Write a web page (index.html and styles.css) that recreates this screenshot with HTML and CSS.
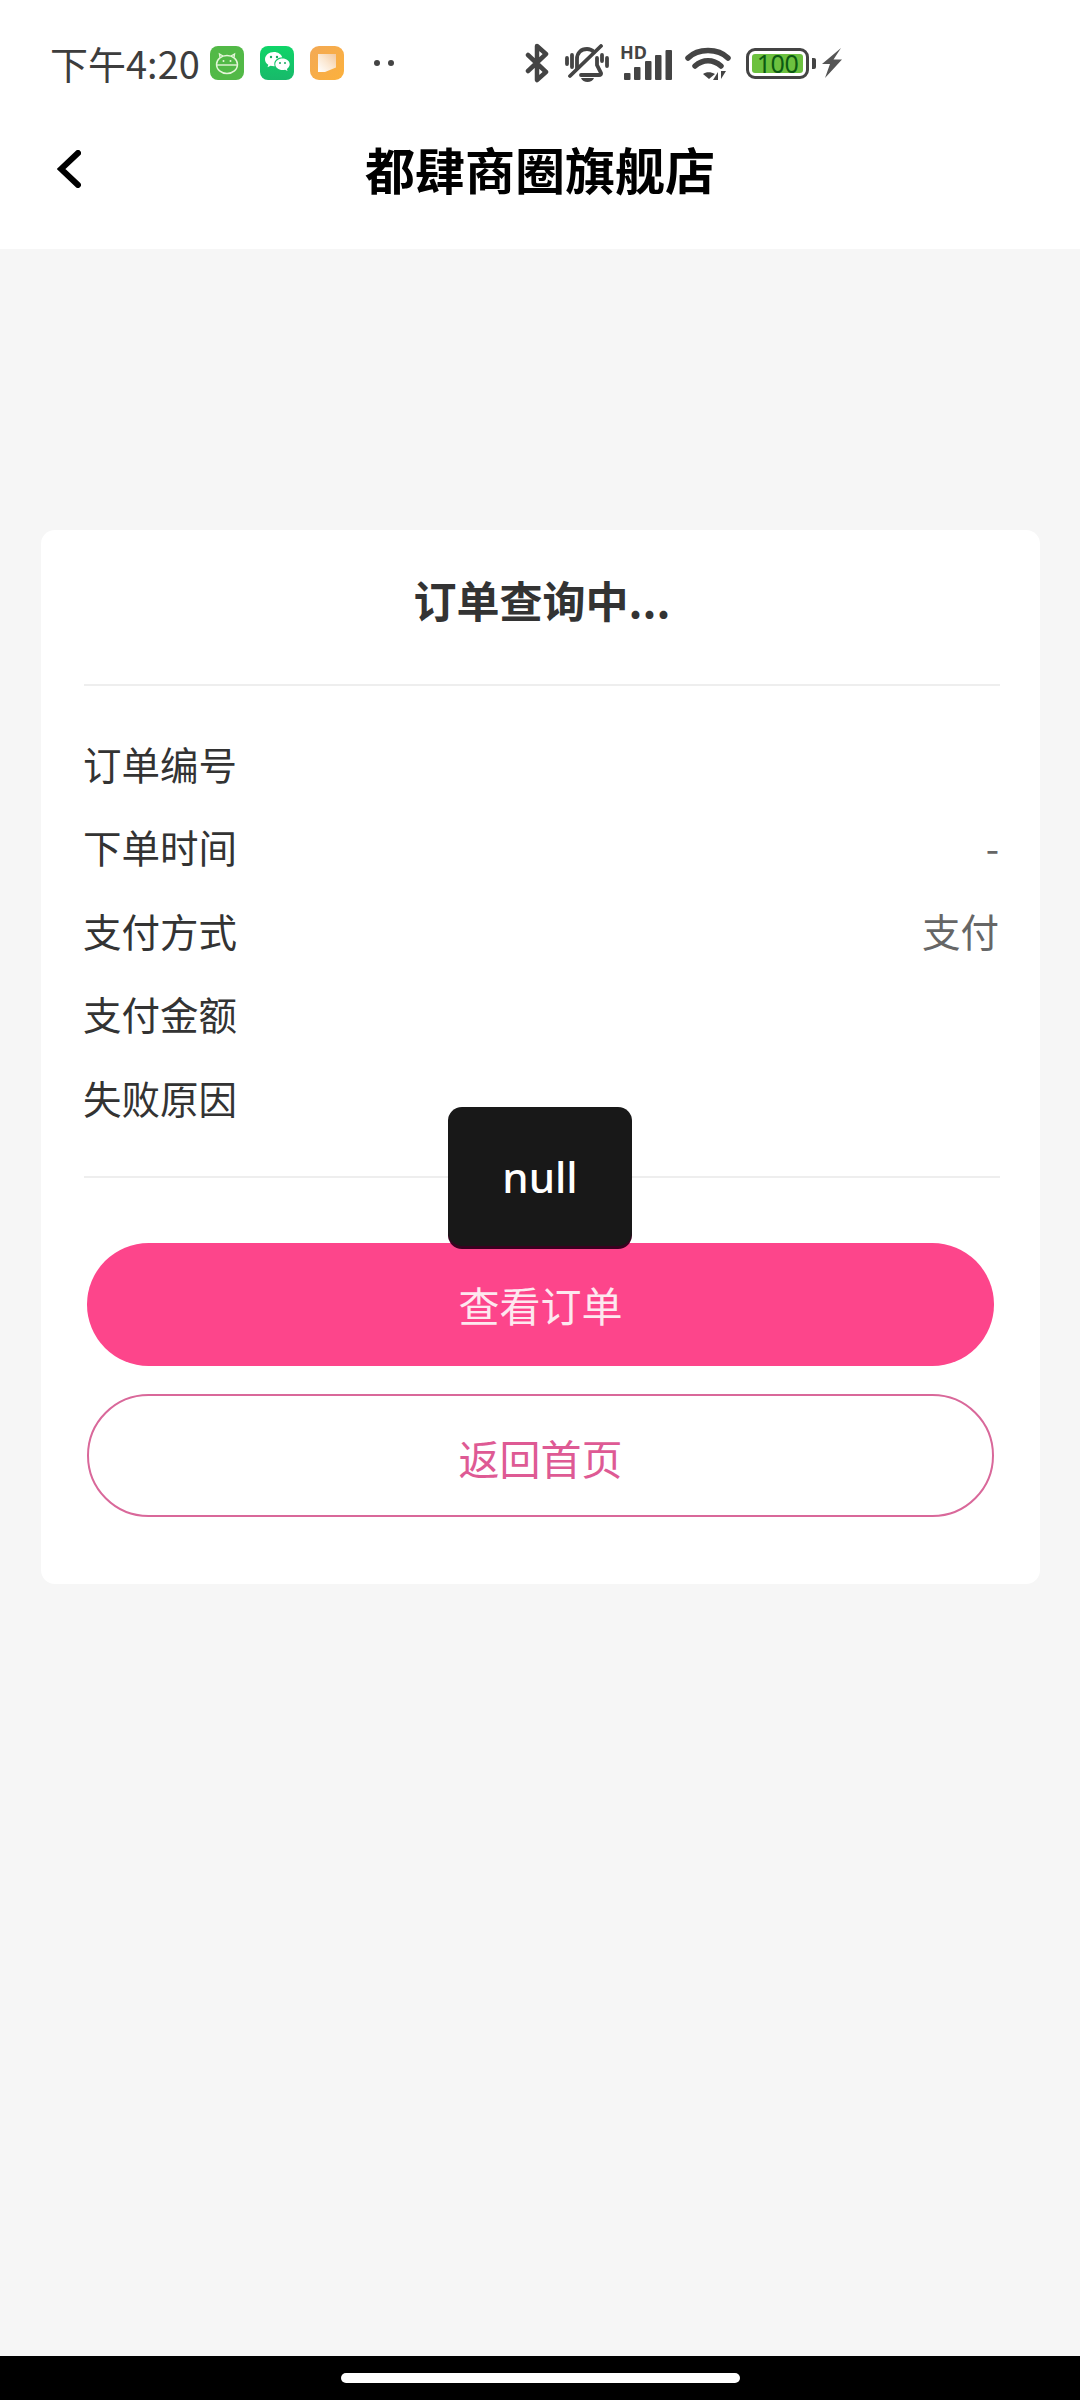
FILE: index.html
```html
<!DOCTYPE html>
<html lang="zh-CN">
<head>
<meta charset="utf-8">
<title>都肆商圈旗舰店</title>
<link rel="stylesheet" href="styles.css">
</head>
<body>
<div class="screen">
  <header class="top">
    <div class="status">
      <span class="time">下午4:20</span>
      <div class="apps">
        <svg class="app" viewBox="0 0 34 34"><rect width="34" height="34" rx="8" fill="#52b947"/><g fill="none" stroke="#e4f5d8" stroke-width="1.4"><ellipse cx="17" cy="18.5" rx="10.5" ry="9"/><path d="M7 19h20"/><path d="M10 11.5 9.5 8l3.5 2M24 11.5l.5-3.500-3.500 2"/></g><circle cx="13.500" cy="15" r="1" fill="#e4f5d8"/><circle cx="20.500" cy="15" r="1" fill="#e4f5d8"/></svg>
        <svg class="app" viewBox="0 0 34 34"><defs><linearGradient id="wx" x1="0" y1="0" x2="0" y2="1"><stop offset="0" stop-color="#0fd568"/><stop offset="1" stop-color="#18b96a"/></linearGradient></defs><rect width="34" height="34" rx="8" fill="url(#wx)"/><path d="M14 6c-5 0-9 3.200-9 7.200 0 2.300 1.300 4.200 3.300 5.500l-.8 2.600 3-1.600c1.100.3 2.200.5 3.500.5h.7c-.3-.8-.4-1.500-.4-2.200 0-3.700 3.500-6.500 8-6.700C21.200 8.100 17.900 6 14 6z" fill="#fff"/><path d="M22.500 12.500c-4 0-7.200 2.600-7.200 5.800s3.200 5.800 7.200 5.800c.9 0 1.800-.1 2.600-.4l2.400 1.300-.6-2.100c1.700-1.100 2.800-2.800 2.800-4.600 0-3.200-3.200-5.800-7.200-5.800z" fill="#fff"/><circle cx="11" cy="11" r="1.200" fill="#18a860"/><circle cx="17" cy="11" r="1.200" fill="#18a860"/><circle cx="20" cy="17" r="1" fill="#18a860"/><circle cx="25" cy="17" r="1" fill="#18a860"/></svg>
        <svg class="app" viewBox="0 0 34 34"><defs><linearGradient id="nt" x1="0" y1="0" x2="1" y2="1"><stop offset="0" stop-color="#f3a955"/><stop offset="1" stop-color="#fcb13c"/></linearGradient><linearGradient id="pg" x1="0" y1="1" x2="1" y2="0"><stop offset="0" stop-color="#fff"/><stop offset=".5" stop-color="#fbe8d2"/><stop offset="1" stop-color="#f2c9a0"/></linearGradient></defs><rect width="34" height="34" rx="9" fill="url(#nt)"/><path d="M8 8h18v13.500L15 26H8z" fill="url(#pg)"/></svg>
      </div>
      <div class="more"><i></i><i></i></div>
      <div class="sys">
        <svg class="i-bt" viewBox="0 0 24 40"><path d="M3 12 21 29 12 37V3l9 8L3 28" fill="none" stroke="#444" stroke-width="4.500" stroke-linejoin="round" stroke-linecap="round"/></svg>
        <svg class="i-bell" viewBox="0 0 44 38"><g fill="none" stroke="#444" stroke-width="3.800" stroke-linecap="round"><path d="M36 2 5 32"/><path d="M12 24V15c0-6 4-10 10-10 3 0 5 1 7 3"/><path d="M32 14v7l4 8c.4 1-.3 2-2 2H16"/><path d="M2 14v6M7 11v12M37 11v6M42 14v8"/></g><path d="M16 34h13c-1 2.500-3.500 4-6.500 4S17 36.500 16 34z" fill="#444"/></svg>
        <div class="signal">
          <span class="hd">HD</span>
          <svg class="i-bars" viewBox="0 0 48 30"><rect x="0" y="23" width="6.500" height="7" rx="1" fill="#444"/><rect x="10" y="17" width="6.500" height="13" rx="1" fill="#444"/><rect x="21" y="11" width="6.500" height="19" rx="1" fill="#444"/><rect x="31" y="5" width="6.500" height="25" rx="1" fill="#444"/><rect x="41.500" y="0" width="6.500" height="30" rx="1" fill="#444"/></svg>
        </div>
        <svg class="i-wifi" viewBox="0 0 46 34"><g fill="none" stroke="#444" stroke-width="5.500" stroke-linecap="round"><path d="M3 12C13 2 33 2 43 12"/><path d="M10 20c8-7 18-7 26 0"/></g><path d="M24 33l-6-5c3-2.500 8-2.500 12 0z" fill="#444"/><path d="M33 34v-8l-5 8zM36 25v8l5-8z" fill="#444"/></svg>
        <div class="battery">
          <div class="cell"><span class="level">100</span></div>
          <i class="nub"></i>
        </div>
        <svg class="i-bolt" viewBox="0 0 20 30"><path d="M19 0 11.500 11.500H20L3 30l5-14H0z" fill="#555"/></svg>
      </div>
    </div>
    <nav class="nav">
      <svg class="back" viewBox="0 0 24 38"><path d="M21 3 4 19l17 16" fill="none" stroke="#000" stroke-width="6" stroke-linecap="round" stroke-linejoin="miter"/></svg>
      <h1 class="shop">都肆商圈旗舰店</h1>
    </nav>
  </header>

  <main class="main">
    <section class="card">
      <h2 class="state">订单查询中...</h2>
      <dl class="rows">
        <div class="row"><dt>订单编号</dt><dd></dd></div>
        <div class="row"><dt>下单时间</dt><dd>-</dd></div>
        <div class="row"><dt>支付方式</dt><dd>支付</dd></div>
        <div class="row"><dt>支付金额</dt><dd></dd></div>
        <div class="row"><dt>失败原因</dt><dd></dd></div>
      </dl>
      <div class="actions">
        <button class="btn primary">查看订单</button>
        <button class="btn ghost">返回首页</button>
      </div>
    </section>
    <div class="toast">null</div>
  </main>

  <footer class="gesture"><i class="pill"></i></footer>
</div>
</body>
</html>
```
FILE: styles.css
```css
* { box-sizing: border-box; }
html, body { margin: 0; padding: 0; }
body {
  width: 1080px;
  height: 2400px;
  overflow: hidden;
  font-family: "Noto Sans CJK SC", "Noto Sans", sans-serif;
  color: #333;
  background: #f6f6f6;
}
.screen { display: flex; flex-direction: column; height: 2400px; position: relative; }

.top { background: #fff; height: 249px; flex: none; }
.status { height: 126px; display: flex; align-items: center; padding-left: 50px; }
.time { font-size: 38px; line-height: 1; color: #3d3d3d; width: 160px; white-space: nowrap; }
.apps { display: flex; gap: 16px; }
.app { width: 34px; height: 34px; display: block; }
.more { display: flex; gap: 8px; margin-left: 30px; }
.more i { width: 6px; height: 6px; border-radius: 50%; background: #444; display: block; }
.sys { display: flex; align-items: center; margin-left: 131px; }
.i-bt { width: 24px; height: 40px; display: block; }
.i-bell { width: 44px; height: 38px; display: block; margin-left: 16px; }
.signal { position: relative; width: 50px; height: 34px; margin-left: 13px; display: flex; align-items: flex-end; justify-content: flex-end; }
.hd { position: absolute; left: -2px; top: -3px; font: 700 18px/18px "Noto Sans", sans-serif; color: #444; }
.i-bars { width: 48px; height: 30px; display: block; }
.i-wifi { width: 46px; height: 34px; display: block; margin-left: 13px; }
.battery { display: flex; align-items: center; margin-left: 15px; }
.cell { width: 63px; height: 31px; border: 3px solid #444; border-radius: 9px; padding: 3px; display: flex; }
.level { flex: 1; background: #6cc13f; border-radius: 3px; color: #0b5a12; font: 400 25px/19px "Noto Sans", sans-serif; text-align: center; letter-spacing: -.5px; }
.nub { width: 4px; height: 11px; background: #444; border-radius: 0 2px 2px 0; margin-left: 3px; display: block; }
.i-bolt { width: 20px; height: 30px; display: block; margin-left: 6px; }

.nav { height: 123px; padding-bottom: 39px; display: flex; align-items: center; justify-content: center; position: relative; }
.back { position: absolute; left: 57px; top: 24px; width: 24px; height: 38px; }
.shop { margin: 0; font-size: 50px; line-height: 60px; font-weight: 700; color: #000; }

.main { flex: 1; padding: 281px 40px 0 41px; position: relative; }
.card { background: #fff; border-radius: 14px; height: 1054px; padding: 0 40px 0 43px; }
.state { margin: 0; padding: 39px 0 55px; font-size: 43px; line-height: 60px; font-weight: 700; color: #333; text-align: center; border-bottom: 2px solid #eee; }
.rows { margin: 0; padding: 35px 0 37px; border-bottom: 2px solid #eee; }
.row { height: 83.5px; display: flex; justify-content: space-between; align-items: center; font-size: 38.5px; }
.row dt { color: #333; margin-left: -1px; }
.row dd { margin: 0; color: #666; padding-right: 1px; }
.actions { display: flex; flex-direction: column; gap: 28px; padding: 65px 6px 0 3px; }
.btn { display: block; width: 100%; height: 123px; border-radius: 62px; font-family: inherit; font-size: 41px; padding: 0; }
.primary { background: #fd458b; border: 0; color: #fde8ef; }
.ghost { background: #fff; border: 2px solid #d9689a; color: #de5a94; padding-top: 4px; }

.toast { position: absolute; left: 448px; top: 858px; width: 184px; height: 139px; background: #181818; border-radius: 14px; color: #fff; font: 500 42px/139px "Noto Sans", sans-serif; text-align: center; box-shadow: 0 3px 0 #3a0020; }

.gesture { height: 44px; flex: none; background: #000; display: flex; justify-content: center; padding-top: 17px; }
.pill { width: 399px; height: 10px; border-radius: 5px; background: #fff; display: block; }
```
